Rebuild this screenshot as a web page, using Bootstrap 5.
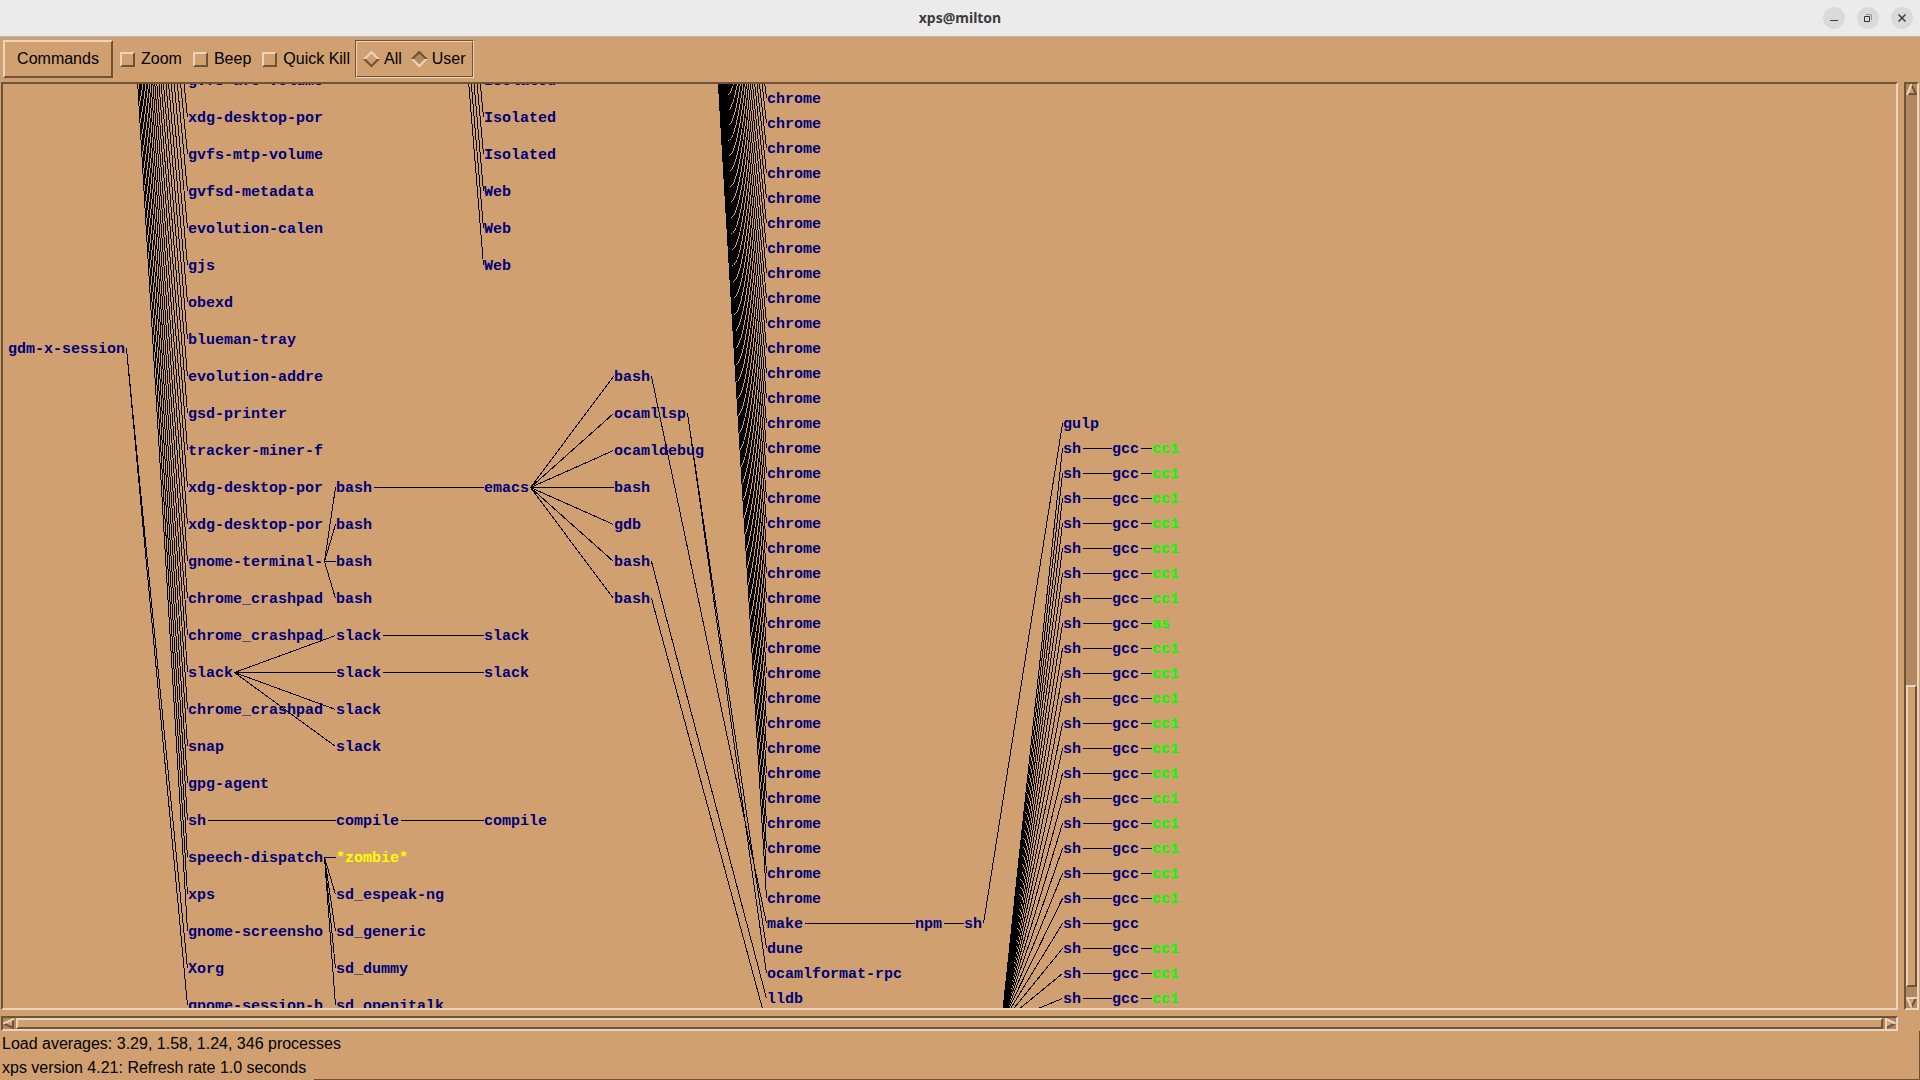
<!DOCTYPE html>
<html lang="en">
<head>
<meta charset="utf-8">
<meta name="viewport" content="width=device-width, initial-scale=1">
<title>xps@milton</title>
<link href="https://cdn.jsdelivr.net/npm/bootstrap@5.3.0/dist/css/bootstrap.min.css" rel="stylesheet">
<style>
:root { --tan: #d0a070; --lite: #ecd5bf; --dim: #6f5339; --trough: #b1885f; }
body { background: var(--tan); color: #000; font-family: "Liberation Sans", Arial, sans-serif; font-size: 16px; line-height: 24px; }
.titlebar { background: #ebebeb; border-bottom: 1px solid #b6b6b6; height: 37px; padding-right: 7px; }
.titlebar h1 { font: 700 14px/20px "Noto Sans", "Open Sans", sans-serif; color: #3d3d3d; }
.win-btns { gap: 12px; }
.win-btn { width: 22px; height: 22px; background: #dadada; }
.toolbar { height: 45px; padding: 3px 3px 4px; }
.bevel { border: 2px solid; border-color: var(--lite) var(--dim) var(--dim) var(--lite); }
.sunken { border: 2px solid; border-color: var(--dim) var(--lite) var(--lite) var(--dim); }
.cmd-btn { background: var(--tan); width: 110px; height: 38px; line-height: 34px; margin-right: 7px; }
.opt { gap: 6px; margin-right: 11px; }
.opt-last { margin-right: 5px; }
.opt input { appearance: none; margin: 0; flex: none; }
.tick { width: 15px; height: 15px; background: var(--tan); }
.tick:checked { background: var(--trough); border-color: var(--dim) var(--lite) var(--lite) var(--dim); }
.groove { height: 38px; border: 1px solid; border-color: var(--dim) var(--lite) var(--lite) var(--dim); position: relative; padding: 0 7px; gap: 9px; }
.groove::before { content: ""; position: absolute; inset: 0; border: 1px solid; border-color: var(--lite) var(--dim) var(--dim) var(--lite); pointer-events: none; }
.groove .opt { margin: 0; gap: 4px; }
.gem { width: 17px; height: 17px; display: grid; clip-path: polygon(50% 0, 100% 50%, 50% 100%, 0 50%); background: linear-gradient(var(--lite) 50%, var(--dim) 50%); }
.gem::before { content: ""; margin: 3px; background: var(--tan); clip-path: polygon(50% 0, 100% 50%, 50% 100%, 0 50%); }
.gem:checked { background: linear-gradient(var(--dim) 50%, var(--lite) 50%); }
.gem:checked::before { background: var(--trough); }
.workarea { display: grid; grid-template: minmax(0, 1fr) 15px / minmax(0, 1fr) 15px; gap: 6px; padding: 0 1px; min-height: 0; }
.tree { display: block; width: 100%; height: 100%; font: 700 15px "Liberation Mono", monospace; fill: #000078; }
.tree path { fill: none; stroke: #000; shape-rendering: crispEdges; }
.run { fill: #00ff00; }
.zombie { fill: #ffff00; }
.scroller { background: var(--trough); }
.scroller button { padding: 0; border: 0; background: none; width: 11px; height: 11px; display: block; flex: none; }
.scroller svg { display: block; }
.thumb { background: var(--tan); }
.before-v { flex: 590 0 0; }
.thumb-v { flex: 298 0 0; }
.after-v { flex: 10 0 0; }
.scroller .thumb-h { margin: 0 2px; }
.statusbar { border: solid var(--dim); border-width: 0 1px 1px 0; height: 49px; padding-top: 1px; }
.status-line { width: 314px; padding-left: 2px; background: var(--tan); white-space: nowrap; }
.status-end { height: 24px; }
</style>
<script src="https://cdn.jsdelivr.net/npm/bootstrap@5.3.0/dist/js/bootstrap.bundle.min.js"></script>
</head>
<body class="vh-100 d-flex flex-column overflow-hidden">
<header class="titlebar d-flex align-items-center flex-shrink-0 position-relative">
  <h1 class="m-0 position-absolute start-0 end-0 text-center">xps@milton</h1>
  <div class="win-btns d-flex ms-auto position-relative">
    <button class="win-btn border-0 p-0 rounded-circle d-flex" type="button" aria-label="Minimize"><svg width="22" height="22"><path d="M7 13.5h8" stroke="#3d3d3d"/></svg></button>
    <button class="win-btn border-0 p-0 rounded-circle d-flex" type="button" aria-label="Restore"><svg width="22" height="22" fill="none"><path d="M7.5 9.5h5v5h-5z" stroke="#333"/><path d="M9 7.5h5.500v5.500" stroke="#999"/></svg></button>
    <button class="win-btn border-0 p-0 rounded-circle d-flex" type="button" aria-label="Close"><svg width="22" height="22"><path d="M7.500 7.500l7 7m0-7l-7 7" stroke="#3d3d3d" stroke-width="1.500"/></svg></button>
  </div>
</header>

<div class="toolbar d-flex align-items-center flex-shrink-0">
  <button class="cmd-btn bevel p-0" type="button">Commands</button>
  <label class="opt d-flex align-items-center"><input class="tick bevel" type="checkbox">Zoom</label>
  <label class="opt d-flex align-items-center"><input class="tick bevel" type="checkbox">Beep</label>
  <label class="opt opt-last d-flex align-items-center"><input class="tick bevel" type="checkbox">Quick Kill</label>
  <div class="groove d-flex align-items-center" role="radiogroup" aria-label="Processes shown">
    <label class="opt d-flex align-items-center"><input class="gem" type="radio" name="who">All</label>
    <label class="opt d-flex align-items-center"><input class="gem" type="radio" name="who" checked>User</label>
  </div>
</div>

<main class="workarea flex-grow-1">
  <div class="sunken overflow-hidden"><svg class="tree" id="tree" role="img" aria-label="Process tree"></svg></div>
  <div class="scroller sunken d-flex flex-column">
    <button type="button" aria-label="Scroll up"><svg width="11" height="11"><path d="M5.500 0L11 11H0z" fill="#d0a070"/><path d="M5.500 1L10 10H1" fill="none" stroke="#6f5339" stroke-width="2"/><path d="M5.500 0L1 11" stroke="#ecd5bf" stroke-width="2"/></svg></button>
    <div class="before-v"></div><div class="thumb bevel thumb-v"></div><div class="after-v"></div>
    <button type="button" aria-label="Scroll down"><svg width="11" height="11"><path d="M0 0h11L5.500 11z" fill="#d0a070"/><path d="M10 1L5.500 10" stroke="#6f5339" stroke-width="2"/><path d="M11 1H1l4.500 9.500" fill="none" stroke="#ecd5bf" stroke-width="2"/></svg></button>
  </div>
  <div class="scroller sunken d-flex">
    <button type="button" aria-label="Scroll left"><svg width="11" height="11"><path d="M0 5.500L11 0v11z" fill="#d0a070"/><path d="M10 1v9L1 5.500" fill="none" stroke="#6f5339" stroke-width="2"/><path d="M0 5.500L11 1" stroke="#ecd5bf" stroke-width="2"/></svg></button>
    <div class="thumb bevel thumb-h flex-grow-1"></div>
    <button type="button" aria-label="Scroll right"><svg width="11" height="11"><path d="M0 0l11 5.500L0 11z" fill="#d0a070"/><path d="M1 10l9.500-4.500" stroke="#6f5339" stroke-width="2"/><path d="M1 11V1l9.500 4.500" fill="none" stroke="#ecd5bf" stroke-width="2"/></svg></button>
  </div>
</main>

<footer class="statusbar flex-shrink-0">
  <div class="status-line">Load averages: 3.29, 1.58, 1.24, 346 processes</div>
  <div class="status-line status-end">xps version 4.21: Refresh rate 1.0 seconds</div>
</footer>

<script>
// Process tree: every node has a column, a row height and a name; edges run
// from the end of a parent's name to the start of its child's.
const COL = [5, 185, 333, 481, 611, 764, 912, 961, 1060, 1109, 1149];
const CHAR = 9;
let lines = '', texts = '';

function node(col, y, name, cls) {
  texts += `<text x="${COL[col]}" y="${y + 5}"${cls ? ` class="${cls}"` : ''}>${name}</text>`;
  return { x: COL[col] + name.length * CHAR + 1, y: y, at: COL[col] - 1 };
}
function edge(from, to) {
  lines += `M${from.x + .5} ${from.y + .5}L${to.at + .5} ${to.y + .5}`;
}
function child(parent, col, y, name, cls) {
  const n = node(col, y, name, cls);
  edge(parent, n);
  return n;
}

// Parents that are scrolled out of view
const systemd = { x: 69, y: -1112 };
const firefox = { x: 397, y: -842 };
const chrome = { x: 666, y: -830 };
const make = { x: 998, y: 939 };

const gdm = node(0, 264, 'gdm-x-session');
const session = ['gvfs-afc-volume', 'xdg-desktop-por', 'gvfs-mtp-volume', 'gvfsd-metadata',
  'evolution-calen', 'gjs', 'obexd', 'blueman-tray', 'evolution-addre', 'gsd-printer',
  'tracker-miner-f', 'xdg-desktop-por', 'xdg-desktop-por', 'gnome-terminal-',
  'chrome_crashpad', 'chrome_crashpad', 'slack', 'chrome_crashpad', 'snap', 'gpg-agent',
  'sh', 'speech-dispatch', 'xps', 'gnome-screensho', 'Xorg', 'gnome-session-b'
].map((name, i) => child(i < 24 ? systemd : gdm, 1, -4 + 37 * i, name));

['Isolated', 'Isolated', 'Isolated', 'Web', 'Web', 'Web']
  .forEach((name, i) => child(firefox, 3, -4 + 37 * i, name));

const shells = [0, 1, 2, 3].map(i => child(session[13], 2, 403 + 37 * i, 'bash'));
const emacs = child(shells[0], 3, 403, 'emacs');
const tools = ['bash', 'ocamllsp', 'ocamldebug', 'bash', 'gdb', 'bash', 'bash']
  .map((name, i) => child(emacs, 4, 292 + 37 * i, name));

const slacks = [0, 1, 2, 3].map(i => child(session[16], 2, 551 + 37 * i, 'slack'));
child(slacks[0], 3, 551, 'slack');
child(slacks[1], 3, 588, 'slack');
child(child(session[20], 2, 736, 'compile'), 3, 736, 'compile');

child(session[21], 2, 773, '*zombie*', 'zombie');
['sd_espeak-ng', 'sd_generic', 'sd_dummy', 'sd_openjtalk']
  .forEach((name, i) => child(session[21], 2, 810 + 37 * i, name));

for (let i = 0; i < 33; i++) child(chrome, 5, 14 + 25 * i, 'chrome');
const build = child(tools[0], 5, 839, 'make');
child(tools[1], 5, 864, 'dune');
child(tools[1], 5, 889, 'ocamlformat-rpc');
child(tools[5], 5, 914, 'lldb');
edge(tools[6], { at: 763, y: 939 });

const npmSh = child(child(build, 6, 839, 'npm'), 7, 839, 'sh');
child(npmSh, 8, 339, 'gulp');
for (let i = 0; i < 23; i++) {
  const y = 364 + 25 * i;
  const gcc = child(child(make, 8, y, 'sh'), 9, y, 'gcc');
  if (i !== 19) child(gcc, 10, y, i === 7 ? 'as' : 'cc1', 'run');
}
document.getElementById('tree').innerHTML = `<path d="${lines}"/>${texts}`;
</script>
</body>
</html>
